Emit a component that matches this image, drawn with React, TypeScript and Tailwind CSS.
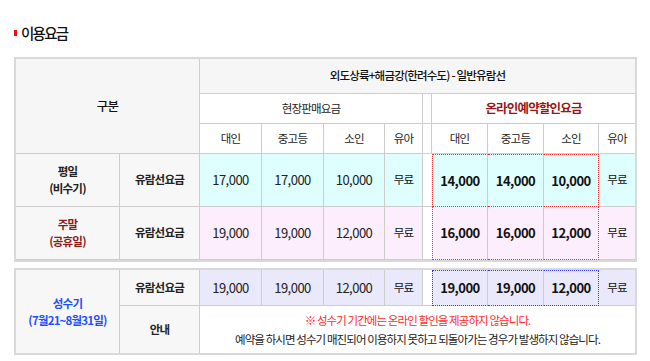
const font = { fontFamily: '"Noto Sans CJK KR", "Noto Sans", sans-serif' };

const widths = [104, 80, 62, 62, 61, 38, 9, 56, 56, 55, 36];

const Cols = () => (
  <colgroup>
    {widths.map((w, i) => (
      <col key={i} style={{ width: w }} />
    ))}
  </colgroup>
);

const base = "p-0 text-center align-middle";
const rb = `${base} border-solid border-[#cdcdcd] border-r border-b`;
const b = `${base} border-solid border-[#cdcdcd] border-b`;

// dotted outline around the online price cells
const redBox = {
  top: "[border-top:1px_dotted_#f03030]",
  bottom: "[border-bottom:1px_dotted_#f03030]",
  left: "[border-left:1px_dotted_#f03030]",
  right: "[border-right:1px_dotted_#f03030]",
};
const blueBox = {
  top: "[border-top:1px_dotted_#3030ff]",
  bottom: "[border-bottom:1px_dotted_#3030ff]",
  left: "[border-left:1px_dotted_#3030ff]",
  right: "[border-right:1px_dotted_#3030ff]",
};
const grayRight = "[border-right:1px_solid_#cdcdcd]";

const OnlineCells = ({ values, bg, box, top }: { values: string[]; bg: string; box: typeof redBox; top: boolean }) => (
  <>
    {values.map((p, i) => (
      <td
        key={i}
        className={`${base} ${bg} ${top ? box.top : ""} ${box.bottom} ${i === 0 ? box.left : ""} ${
          i === 2 ? box.right : grayRight
        } text-[13px] tracking-[-0.04em] font-bold text-[#111]`}
      >
        {p}
      </td>
    ))}
  </>
);

const PriceRow = ({
  label,
  labelClass,
  bg,
  first,
  prices,
  online,
}: {
  label: React.ReactNode;
  labelClass: string;
  bg: string;
  first: boolean;
  prices: string[];
  online: string[];
}) => (
  <tr className="h-[53px]">
    <td className={`${rb} bg-[#f7f7f7] font-bold leading-[17px] ${labelClass}`}>{label}</td>
    <td className={`${rb} bg-[#f7f7f7] font-bold text-[#222]`}>유람선요금</td>
    {prices.map((p, i) => (
      <td key={i} className={`${rb} ${bg} text-[13px] tracking-[-0.04em] text-[#222]`}>
        {p}
      </td>
    ))}
    <td className={`${rb} ${bg} text-[#111]`}>무료</td>
    <td className={`${b} bg-white`}></td>
    <OnlineCells values={online} bg={bg} box={redBox} top={first} />
    <td className={`${b} ${bg} text-[#111]`}>무료</td>
  </tr>
);

export default function App() {
  return (
    <div className="w-[650px] h-[361px] bg-white pl-[14px] pt-[24px] text-[11.5px] tracking-[-0.07em]" style={font}>
      <div className="flex items-center h-[18px]">
        <span className="w-[3px] h-[6px] bg-[#ee1111] mr-[4px]" />
        <span className="text-[14.5px] font-medium text-[#111] leading-none tracking-[-0.12em]">이용요금</span>
      </div>

      <table className="mt-[15px] w-[623px] table-fixed border-separate border-spacing-0 border-2 border-[#d9d9d9]">
        <Cols />
        <tbody>
          <tr className="h-[35px]">
            <th colSpan={2} rowSpan={3} className={`${rb} bg-[#f6f6f6] font-medium text-[12.5px] text-[#111]`}>
              구분
            </th>
            <th colSpan={9} className={`${b} bg-[#f6f6f6] font-medium text-[#111]`}>
              외도상륙+해금강(한려수도) - 일반유람선
            </th>
          </tr>
          <tr className="h-[30px]">
            <th colSpan={4} className={`${rb} bg-white font-normal text-[#222]`}>
              현장판매요금
            </th>
            <th className={`${rb} bg-white`}></th>
            <th colSpan={4} className={`${b} bg-white font-bold text-[12.5px] text-[#9a1616]`}>
              온라인예약할인요금
            </th>
          </tr>
          <tr className="h-[30px]">
            {["대인", "중고등", "소인", "유아"].map((t) => (
              <th key={t} className={`${rb} bg-white font-normal text-[#222]`}>
                {t}
              </th>
            ))}
            <th className={`${rb} bg-white`}></th>
            {["대인", "중고등", "소인"].map((t) => (
              <th key={t} className={`${rb} bg-white font-normal text-[#222]`}>
                {t}
              </th>
            ))}
            <th className={`${b} bg-white font-normal text-[#222]`}>유아</th>
          </tr>
          <PriceRow
            label={
              <>
                평일
                <br />
                (비수기)
              </>
            }
            labelClass="text-[#222]"
            bg="bg-[#dfffff]"
            first
            prices={["17,000", "17,000", "10,000"]}
            online={["14,000", "14,000", "10,000"]}
          />
          <PriceRow
            label={
              <>
                주말
                <br />
                (공휴일)
              </>
            }
            labelClass="text-[#8b1c1c]"
            bg="bg-[#fdeefd]"
            first={false}
            prices={["19,000", "19,000", "12,000"]}
            online={["16,000", "16,000", "12,000"]}
          />
        </tbody>
      </table>

      <table className="mt-[6px] w-[623px] table-fixed border-separate border-spacing-0 border-2 border-[#d9d9d9]">
        <Cols />
        <tbody>
          <tr className="h-[36px]">
            <td rowSpan={2} className={`${base} border-solid border-[#cdcdcd] border-r bg-[#f7f7f7] font-bold leading-[17px] text-[#1e4fff]`}>
              성수기
              <br />
              (7월21~8월31일)
            </td>
            <td className={`${rb} bg-[#f7f7f7] font-bold text-[#222]`}>유람선요금</td>
            {["19,000", "19,000", "12,000"].map((p, i) => (
              <td key={i} className={`${rb} bg-[#e9e9fb] text-[13px] tracking-[-0.04em] text-[#222]`}>
                {p}
              </td>
            ))}
            <td className={`${rb} bg-[#e9e9fb] text-[#111]`}>무료</td>
            <td className={`${b} bg-white`}></td>
            <OnlineCells values={["19,000", "19,000", "12,000"]} bg="bg-[#e9e9fb]" box={blueBox} top />
            <td className={`${b} bg-[#e9e9fb] text-[#111]`}>무료</td>
          </tr>
          <tr className="h-[47px]">
            <td className={`${base} border-solid border-[#cdcdcd] border-r bg-[#f7f7f7] font-bold text-[#222]`}>안내</td>
            <td colSpan={9} className={`${base} bg-white leading-[19px] tracking-[-0.08em]`}>
              <div className="text-[#ff2a2a]">※ 성수기 기간에는 온라인 할인을 제공하지 않습니다.</div>
              <div className="text-[#222]">예약을 하시면 성수기 매진되어 이용하지 못하고 되돌아가는 경우가 발생하지 않습니다.</div>
            </td>
          </tr>
        </tbody>
      </table>
    </div>
  );
}
